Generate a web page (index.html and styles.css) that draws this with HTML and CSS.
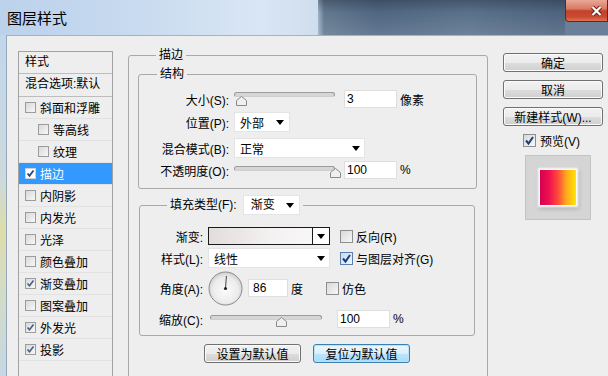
FILE: index.html
```html
<!DOCTYPE html>
<html lang="zh-CN">
<head>
    <meta charset="UTF-8">
    <meta name="viewport" content="width=device-width, initial-scale=1.0">
    <title>图层样式</title>
    <link rel="stylesheet" href="styles.css">
</head>
<body>
<div class="window">
    <!-- 标题栏 -->
    <div class="titlebar">
        <span class="title">图层样式</span>
        <div class="glass"></div>
        <div class="close-area">
            <div class="close">
                <svg width="13" height="12" viewBox="0 0 13 12"><path d="M2.5 2L10.5 10M10.5 2L2.5 10" stroke="#6b1d14" stroke-width="4"/><path d="M2.5 2L10.5 10M10.5 2L2.5 10" stroke="#fff" stroke-width="2.2"/></svg>
            </div>
        </div>
    </div>

    <div class="frame">
        <div class="frame-left"></div>
        <div class="dialog">
            <!-- 左侧样式列表 -->
            <div class="styles-list">
                <div class="list-head">样式</div>
                <div class="list-head">混合选项:默认</div>
                <div class="item"><span class="cb"></span>斜面和浮雕</div>
                <div class="item sub"><span class="cb"></span>等高线</div>
                <div class="item sub"><span class="cb"></span>纹理</div>
                <div class="item sel"><span class="cb on"><svg viewBox="0 0 9 9"><path d="M1.5 4.5L3.5 6.8L7.5 1.5" fill="none" stroke="#24457e" stroke-width="1.8"/></svg></span>描边</div>
                <div class="item"><span class="cb"></span>内阴影</div>
                <div class="item"><span class="cb"></span>内发光</div>
                <div class="item"><span class="cb"></span>光泽</div>
                <div class="item"><span class="cb"></span>颜色叠加</div>
                <div class="item"><span class="cb on"><svg viewBox="0 0 9 9"><path d="M1.5 4.5L3.5 6.8L7.5 1.5" fill="none" stroke="#4a5f85" stroke-width="1.6"/></svg></span>渐变叠加</div>
                <div class="item"><span class="cb"></span>图案叠加</div>
                <div class="item"><span class="cb on"><svg viewBox="0 0 9 9"><path d="M1.5 4.5L3.5 6.8L7.5 1.5" fill="none" stroke="#4a5f85" stroke-width="1.6"/></svg></span>外发光</div>
                <div class="item"><span class="cb on"><svg viewBox="0 0 9 9"><path d="M1.5 4.5L3.5 6.8L7.5 1.5" fill="none" stroke="#4a5f85" stroke-width="1.6"/></svg></span>投影</div>
            </div>

            <!-- 描边 -->
            <fieldset class="group stroke">
                <legend>描边</legend>

                <fieldset class="group struct">
                    <legend>结构</legend>
                    <div class="row r1">
                        <span class="lbl">大小(S):</span>
                        <div class="slider">
                            <div class="track"></div>
                            <svg class="thumb" style="left: 2px" width="11" height="10" viewBox="0 0 11 10"><path d="M0.5 9.5V4.5L5.5 0.5L10.5 4.5V9.5Z" fill="#efefef" stroke="#8a8a8a"/></svg>
                        </div>
                        <span class="num">3</span>
                        <span class="unit">像素</span>
                    </div>
                    <div class="row r2">
                        <span class="lbl">位置(P):</span>
                        <span class="select pos">外部<i class="arrow"></i></span>
                    </div>
                    <div class="row r3">
                        <span class="lbl">混合模式(B):</span>
                        <span class="select mode">正常<i class="arrow"></i></span>
                    </div>
                    <div class="row r4">
                        <span class="lbl">不透明度(O):</span>
                        <div class="slider low">
                            <div class="track"></div>
                            <svg class="thumb" style="left: 96px" width="11" height="10" viewBox="0 0 11 10"><path d="M0.5 9.5V4.5L5.5 0.5L10.5 4.5V9.5Z" fill="#efefef" stroke="#8a8a8a"/></svg>
                        </div>
                        <span class="num">100</span>
                        <span class="unit">%</span>
                    </div>
                </fieldset>

                <fieldset class="group fill">
                    <legend><span>填充类型(F):</span><span class="select type">渐变<i class="arrow"></i></span></legend>
                    <div class="frow f1">
                        <span class="lbl">渐变:</span>
                        <div class="grad-pick"><span class="grad"></span><span class="grad-btn"><i class="arrow"></i></span></div>
                        <span class="chk"><span class="cb big"></span>反向(R)</span>
                    </div>
                    <div class="frow f2">
                        <span class="lbl">样式(L):</span>
                        <span class="select kind">线性<i class="arrow"></i></span>
                        <span class="chk"><span class="cb big on focus"><svg viewBox="0 0 11 11"><path d="M2 5.5L4.5 8.5L9 2" fill="none" stroke="#1d3c78" stroke-width="2"/></svg></span>与图层对齐(G)</span>
                    </div>
                    <div class="frow f3">
                        <span class="lbl">角度(A):</span>
                        <svg class="dial" width="35" height="35" viewBox="0 0 35 35">
                            <defs>
                                <radialGradient id="dialFill" cx="50%" cy="55%" r="55%">
                                    <stop offset="0" stop-color="#fbfbfb"/>
                                    <stop offset="0.7" stop-color="#ececec"/>
                                    <stop offset="1" stop-color="#cdcdcd"/>
                                </radialGradient>
                            </defs>
                            <circle cx="17.5" cy="17.5" r="16.5" fill="url(#dialFill)" stroke="#8c8c8c"/>
                            <line x1="17.5" y1="17.5" x2="18.4" y2="5" stroke="#444" stroke-width="1"/>
                            <circle cx="17.5" cy="17.5" r="1.6" fill="#222"/>
                        </svg>
                        <span class="num angle">86</span>
                        <span class="unit">度</span>
                        <span class="chk dither"><span class="cb big"></span>仿色</span>
                    </div>
                    <div class="frow f4">
                        <span class="lbl">缩放(C):</span>
                        <div class="slider scale">
                            <div class="track"></div>
                            <svg class="thumb" style="left: 66px" width="11" height="10" viewBox="0 0 11 10"><path d="M0.5 9.5V4.5L5.5 0.5L10.5 4.5V9.5Z" fill="#efefef" stroke="#8a8a8a"/></svg>
                        </div>
                        <span class="num">100</span>
                        <span class="unit">%</span>
                    </div>
                </fieldset>

                <div class="defaults">
                    <button class="btn wide">设置为默认值</button>
                    <button class="btn wide focus">复位为默认值</button>
                </div>
            </fieldset>

            <!-- 右侧按钮 -->
            <div class="actions">
                <button class="btn">确定</button>
                <button class="btn">取消</button>
                <button class="btn">新建样式(W)...</button>
                <span class="chk preview-chk"><span class="cb big on"><svg viewBox="0 0 11 11"><path d="M2 5.5L4.5 8.5L9 2" fill="none" stroke="#1d3c78" stroke-width="2"/></svg></span>预览(V)</span>
                <div class="preview"><span class="swatch"></span></div>
            </div>
        </div>
    </div>
</div>
</body>
</html>
```

FILE: styles.css
```css
/* 기본 */
body {
    margin: 0;
    font-family: "Liberation Sans", "Noto Sans CJK SC", sans-serif;
    font-size: 12px;
    color: #000;
}

.window {
    width: 608px;
    height: 376px;
    overflow: hidden;
    display: flex;
    flex-direction: column;
    background: #eeeeee;
}

/* 标题栏 */
.titlebar {
    display: flex;
    height: 35px;
    flex: none;
}

.title {
    flex: 1;
    padding: 9px 0 0 7px;
    font-size: 15px;
    line-height: 20px;
    background: linear-gradient(90deg, #bcd2eb 0, #c6d9ef 120px, #d9e6f4 260px, #cfdeee 318px);
}

.glass {
    width: 247px;
    background:
        linear-gradient(180deg, rgba(25, 35, 50, 0.35) 0, rgba(0, 0, 0, 0) 35%, rgba(255, 255, 255, 0.12) 100%),
        linear-gradient(90deg, #9fb2c6 0, #62788f 6px, #4f6681 60px, #5a718b 150px, #4d637e 240px);
}

.close-area {
    width: 43px;
    background: #6b8098;
}

.close {
    height: 22px;
    box-sizing: border-box;
    border: 1px solid #6b2219;
    border-top: none;
    border-radius: 0 0 0 4px;
    background: linear-gradient(180deg, #e9a898 0%, #d97a62 42%, #c3412a 52%, #c94a31 80%, #df7254 100%);
    display: flex;
    align-items: center;
    justify-content: flex-end;
    padding-right: 4px;
}

.frame {
    flex: 1;
    display: flex;
}

.frame-left {
    width: 6px;
    background: linear-gradient(180deg, #c2d6ec 0, #cdd9dc 40%, #ddddaa 55%, #d4dcc4 70%, #c4d6ea 100%);
}

.dialog {
    flex: 1;
    display: flex;
    align-items: flex-start;
    border-left: 1px solid #97a8ba;
    border-top: 1px solid #a3b3c4;
    background: #eeeeee;
}

/* 样式列表 */
.styles-list {
    width: 95px;
    height: 340px;
    box-sizing: border-box;
    margin: 15px 0 0 11px;
    border: 1px solid #a2a2a2;
}

.list-head {
    height: 21px;
    line-height: 21px;
    padding-left: 6px;
    border-bottom: 1px solid #bdbdbd;
}

.list-head + .list-head {
    height: 22px;
}

.item {
    height: 21px;
    display: flex;
    align-items: center;
    padding-left: 6px;
    border-bottom: 1px solid #e2e2e2;
}

.item.sub {
    padding-left: 19px;
}

.item.sel {
    background: #3399ff;
    color: #fff;
}

.cb {
    width: 11px;
    height: 11px;
    box-sizing: border-box;
    border: 1px solid #9c9c9c;
    background: linear-gradient(135deg, #d9d9d9, #f7f7f7);
    margin-right: 4px;
    flex: none;
}

.cb svg {
    display: block;
    width: 100%;
    height: 100%;
}

.item.sel .cb {
    background: #fff;
    border-color: #d0d0d0;
}

.cb.big {
    width: 13px;
    height: 13px;
    border-color: #8e8e8e;
    margin-right: 3px;
}

.cb.big.focus {
    border-color: #5b7fae;
    background: linear-gradient(135deg, #c9dcf2, #eef5fc);
}

/* 分组框 */
.group {
    margin: 0;
    padding: 0;
    min-width: 0;
    box-sizing: border-box;
    border: 1px solid #a9a9a9;
    border-radius: 3px;
}

.group > legend {
    margin-left: 18px;
    padding: 0 3px;
    line-height: 16px;
}

.stroke {
    width: 360px;
    height: 340px;
    margin: 11px 0 0 15px;
    padding-left: 9px;
}

.struct {
    width: 339px;
    margin-top: 3px;
    padding-bottom: 8px;
}

.row {
    display: flex;
    align-items: center;
    height: 20px;
}

.r1 { margin-top: 7px; }
.r2 { margin-top: 3px; }
.r3 { margin-top: 6px; }
.r4 { margin-top: 2px; }

.row .lbl {
    width: 90px;
    margin-right: 5px;
    text-align: right;
    white-space: nowrap;
}

/* 滑块 */
.slider {
    position: relative;
    width: 101px;
    height: 20px;
    margin-right: 9px;
}

.track {
    margin-top: 3px;
    height: 3px;
    border: 1px solid #9c9c9c;
    border-bottom-color: #cfcfcf;
    border-radius: 3px;
    background: #d6d6d6;
}

.thumb {
    position: absolute;
    top: 7px;
    display: block;
}

.slider.low .track { margin-top: 6px; }
.slider.low .thumb { top: 8px; }

.slider.scale {
    width: 112px;
    margin: 0 15px 0 2px;
}

.slider.scale .track { margin-top: 6px; }
.slider.scale .thumb { top: 8px; }

.num {
    width: 53px;
    height: 18px;
    box-sizing: border-box;
    padding-left: 2px;
    line-height: 16px;
    background: #fff;
    border: 1px solid #dedede;
    margin-right: 3px;
}

.num.angle {
    width: 40px;
    margin-left: 5px;
    padding-left: 4px;
}

/* 下拉框 */
.select {
    display: flex;
    align-items: center;
    justify-content: space-between;
    height: 20px;
    box-sizing: border-box;
    padding: 0 5px 0 5px;
    background: #fff;
    border: 1px solid #e4e4e4;
}

.select.pos { width: 56px; }
.select.mode { width: 131px; padding-right: 4px; }
.select.type { width: 57px; margin-left: 6px; padding-left: 7px; }
.select.kind { width: 122px; margin-right: 10px; padding-right: 4px; }

.arrow {
    width: 0;
    height: 0;
    border-left: 4px solid transparent;
    border-right: 4px solid transparent;
    border-top: 5px solid #000;
}

/* 填充 */
.fill {
    width: 336px;
    margin: 6px 0 0 1px;
    padding-bottom: 6px;
}

.fill > legend {
    margin-left: 27px;
    display: flex;
    align-items: center;
    height: 20px;
}

.frow {
    display: flex;
    align-items: center;
    height: 20px;
}

.frow .lbl {
    width: 63px;
    margin-right: 5px;
    text-align: right;
    white-space: nowrap;
}

.f1 { margin-top: 12px; height: 18px; }
.f2 { margin-top: 3px; }
.f3 { margin-top: 3px; height: 34px; }
.f4 { margin-top: 4px; }

.grad-pick {
    width: 122px;
    height: 18px;
    box-sizing: border-box;
    display: flex;
    border: 1px solid #1a1a1a;
    margin-right: 10px;
}

.grad {
    flex: 1;
    background: linear-gradient(90deg, #e3dcdc, #f4f1f1 60%, #f8f7f7);
}

.grad-btn {
    width: 16px;
    border-left: 1px solid #1a1a1a;
    background: #fff;
    display: flex;
    align-items: center;
    justify-content: center;
}

.chk {
    display: flex;
    align-items: center;
    white-space: nowrap;
}

.dial {
    display: block;
    flex: none;
}

.chk.dither {
    margin-left: 23px;
}

.defaults {
    width: 336px;
    margin: 8px 0 0 1px;
    display: flex;
    justify-content: center;
    gap: 12px;
}

/* 按钮 */
.btn {
    display: block;
    width: 100px;
    height: 19px;
    padding: 0;
    font: inherit;
    color: #000;
    border: 1px solid #707070;
    border-radius: 3px;
    background: linear-gradient(180deg, #f2f2f2 0%, #ebebeb 50%, #dddddd 51%, #cfcfcf 100%);
    box-shadow: inset 0 0 0 1px #fbfbfb;
}

.btn.wide {
    width: 97px;
}

.btn.focus {
    border-color: #3c7fb1;
    background: linear-gradient(180deg, #eaf6fd 0%, #d9f0fc 50%, #bee6fd 51%, #a7d9f5 100%);
    box-shadow: inset 0 0 0 1px #b8e2f8;
}

.actions {
    width: 100px;
    margin: 17px 0 0 15px;
}

.actions .btn + .btn {
    margin-top: 8px;
}

.preview-chk {
    margin: 7px 0 0 20px;
    height: 14px;
}

.preview-chk .cb {
    margin-right: 4px;
}

.preview {
    width: 66px;
    height: 65px;
    box-sizing: border-box;
    margin: 8px 0 0 22px;
    background: #d5d5d5;
    border: 1px solid #c3c3c3;
    display: flex;
    align-items: center;
    justify-content: center;
}

.swatch {
    width: 36px;
    height: 35px;
    background: linear-gradient(90deg, #d6004f 0%, #ef1050 25%, #ff4a3a 50%, #ffa51e 72%, #ffe600 100%);
    box-shadow: 0 0 2px 2px #fff, 1px 2px 4px 2px rgba(0, 0, 0, 0.18);
}
```
